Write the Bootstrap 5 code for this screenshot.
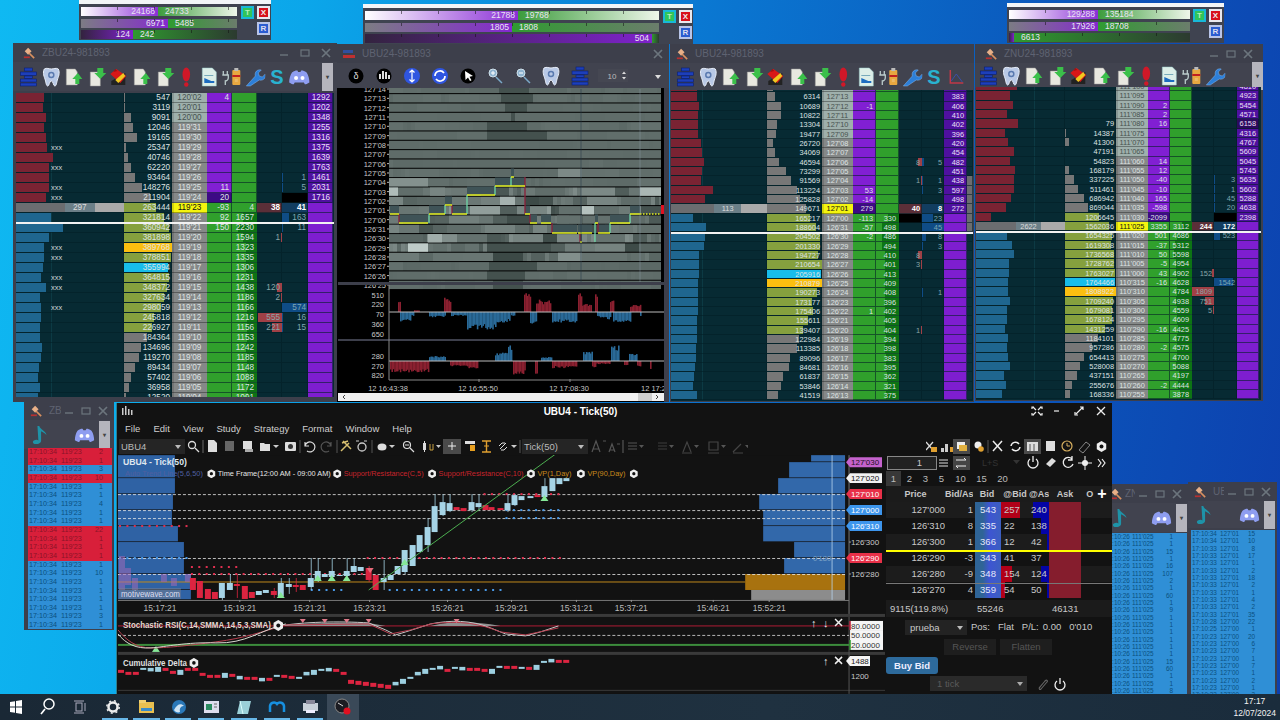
<!DOCTYPE html>
<html lang="en"><head><meta charset="utf-8"><title>Trading desktop</title>
<link href="https://cdn.jsdelivr.net/npm/bootstrap@5.3.0/dist/css/bootstrap.min.css" rel="stylesheet">
<style>
html,body{margin:0;height:720px;overflow:hidden}
body{font-family:"Liberation Sans",Arial,sans-serif;background:#111}
.desk{width:1280px;height:720px;overflow:hidden;background:linear-gradient(100deg,#0fb9f2 0,#0ba6ea 22%,#0a78d2 50%,#0b55ba 78%,#0d3fae 100%)}
.dwin{position:absolute;background:#3d3f4b;overflow:hidden}
.w-zb{left:13px;top:43px;width:324px;height:359px}
.w-ub1{left:337px;top:44px;width:332px;height:358px}
.w-ub2{left:670px;top:44px;width:304px;height:358px}
.w-zn{left:975px;top:44px;width:288px;height:357px}
.w-ts1{left:24px;top:401px;width:90px;height:229px}
.w-ts2{left:1100px;top:484px;width:88px;height:210px}
.w-ts3{left:1188px;top:482px;width:89px;height:212px}
.w-main{left:116px;top:403px;width:996px;height:291px;background:#121212;border-left:1px solid #2f7f8d;color:#ddd}
.mini{position:absolute;background:#3f4350;border-top:4px solid #f2f5f7;height:40px}
.m1{left:79px;top:0;width:192px}.m2{left:363px;top:4px;width:330px}.m3{left:1007px;top:3px;width:217px}
.mbars{position:absolute;left:2px;top:3px}
.mbar{display:flex;height:9px;margin-bottom:2.5px;font-size:8.5px;line-height:9px;color:#e9e3f2;position:relative}
.mbar::after{content:"";position:absolute;inset:0 0 auto 0;height:3px;background:repeating-linear-gradient(90deg,transparent 0 36px,#1118 36px 37px)}
.mp{text-align:right;padding-right:3px;overflow:hidden}.mg{padding-left:7px;overflow:hidden}
.b1 .mp{background:linear-gradient(90deg,#fff,#8a2fd6)}.b1 .mg{background:linear-gradient(90deg,#3c9c3c,#eef6ea)}
.b2 .mp{background:linear-gradient(90deg,#7c7c84,#8428d0)}.b2 .mg{background:linear-gradient(90deg,#2f9c30,#6b7d6c)}
.b3 .mp{background:linear-gradient(90deg,#33233f,#7f22cc)}.b3 .mg{background:linear-gradient(90deg,#2f9a2f,#2c3a30)}
.mbtn{position:absolute;width:13px;height:13px;font-size:8px;line-height:10px;text-align:center;font-weight:700}
.mt{background:#31c45a;border:2px solid #18b8d8;color:#b8f0b8;top:2px}
.mx{background:#d8101c;border:2px solid #e8e8ee;color:#eee;top:2px}
.mr{background:#2a5cd0;border:2px solid #b8c4e8;color:#dde;top:18px}
.m1 .mt{left:162px}.m1 .mx,.m1 .mr{left:178px}
.m2 .mt{left:300px}.m2 .mx,.m2 .mr{left:316px}
.m3 .mt{left:186px}.m3 .mx,.m3 .mr{left:202px}
.tbar{height:19px;display:flex;align-items:center;padding:0 6px;font-size:10px;color:#5f6372;gap:3px}
.tbar span{flex:1;white-space:nowrap;overflow:hidden}
.tbar svg{flex:none}
.tools{display:flex;align-items:center;height:29px;background:#41434f}
.tools>svg,.tools>b{flex:none}
.ti{width:22.6px;height:20px}
.sbtn{font:700 20px/20px "Liberation Sans",sans-serif;color:#29b2d0;width:22.6px;text-align:center}
.ddb{width:11px;height:28px;background:#b5b5bd;margin-left:auto;text-align:center;color:#444;font-size:6px;line-height:28px;flex:none}
.lad{position:absolute;left:3px;background:#072a33;overflow:hidden;color:#dfe3e3}
.w-zb .lad{top:50px;width:318px;font-size:8.2px;height:304px}
.w-ub2 .lad{left:1px;top:46px;width:302px;font-size:7.4px;height:311px}
.w-ub2 .lrow:first-child{margin-top:-7px}
.w-zn .lad{left:1px;top:43px;width:285px;font-size:7.4px;height:313px}
.w-zn .lrow:first-child{margin-top:-5px}
.lrow{display:grid;height:10px;line-height:9.5px}
.w-zb .lrow{grid-template-columns:108px 48px 35px 25px 25px 25px 26px 25px}
.w-ub2 .lrow{height:9.33px;line-height:9px;grid-template-columns:96px 55px 31px 23px 23px 23px 22px 23px 6px}
.w-zn .lrow{height:9.33px;line-height:9px;grid-template-columns:89px 51px 32px 22px 22px 22px 23px 22px}
.lc{position:relative;box-shadow:inset -1px -1px 0 #04202799;overflow:hidden;text-align:right;padding-right:2px;white-space:nowrap}
.lc>i{position:absolute;top:0;bottom:1px;left:0}
.lc>span{position:relative}
.cl{text-align:left;padding:0;background:linear-gradient(90deg,transparent 32.5%,#0c3a44 32.5% 33%,transparent 33% 65.5%,#0c3a44 65.5% 66%,transparent 66%)}
.cl em{position:absolute;left:35px;font-style:normal;color:#cfd6d8;font-size:7.5px}
.fr{background:#7a2333}.fb{background:#1f668f}
.lv{background:#072a33}.fg{background:#777}.fv{background:#85a03e}.fo{background:#fbbf10}.fc{background:#18bdea}
.lp{background:#858888;text-align:center;padding:0;box-shadow:inset 0 -1px 0 #0005,inset 2px 0 0 #0002}
.lp.pale{background:#9fb0ac;color:#47524f}
.lp.now{background:#f4f40f;color:#111}
.lu{background:#811fd3;padding-right:3px}.lu.gr{background:#30a02c}.lu.dk{background:#3d0a85}.lu.dg{background:#0b6a12}
.lgc{background:#30a02c;padding-right:3px}.lgd{background:#0d7414;right:0;left:auto!important}
.l8{color:#8aa6a8}.l9{color:#7fa8b2}
.l8 i{right:0;left:auto;background:#a04046}.l9 i{background:#0f4c86}
.l8.big{background:#5b2f38;color:#fff;font-weight:700}.l9.big{background:#123d60;color:#fff;font-weight:700}
.lblk{background:#000}
.lr{background:#7e1ed0;color:#ece0f6;padding-right:3px}.lr.v{background:#4f10a0}.lr.d{background:#2c0a5e}
.seg{position:absolute;top:0;bottom:1px;left:0;right:0;display:flex;text-align:center;color:#ddd}
.seg u{text-decoration:none;display:block}
.lx{background:#0a2f38}.lx2{background:#6b6d70}
.wline{position:absolute;height:1.5px;background:#f2f2f2;z-index:3;left:3px}
.w-zb .wline{top:179px;width:318px}.w-ub2 .wline{top:188px;left:1px;width:302px}.w-zn .wline{top:187px;left:1px;width:285px}
.svt{font-family:"Liberation Sans",sans-serif}
.tsl{position:absolute;overflow:hidden;background:#2f8fd6;color:#0b4f80}
.w-ts1 .tsl{left:4px;top:47px;width:84px;height:181px;font-size:7.2px}
.w-ts2 .tsl{left:1px;top:49px;width:86px;height:161px;font-size:6.4px}
.w-ts3 .tsl{left:3px;top:48px;width:84px;height:164px;font-size:6.4px}
.tsr{display:grid;white-space:nowrap}
.w-ts1 .tsr{height:8.67px;line-height:8.67px;grid-template-columns:32px 29px 13px;padding-left:1px}
.w-ts2 .tsr,.w-ts3 .tsr{height:7.33px;line-height:7.33px}
.w-ts2 .tsr{grid-template-columns:27px 27px 14px;padding-left:4px}
.w-ts3 .tsr{grid-template-columns:28px 26px 9px;padding-left:1px}
.tsr b{font-weight:400;text-align:right}
.tsr.rd{background:#d81f3a;color:#8a1428}
.mtitle{height:17px;position:relative;color:#fff;font-weight:700;font-size:10px;line-height:17px;text-align:center;padding-right:68px}
.mtitle svg{position:absolute;top:1px}
.mmenu{height:18px;display:flex;font-size:9.5px;line-height:18px;color:#cfcfcf;padding-left:8px;gap:13.1px}
.mtool{height:17px;display:flex}
.fsel{background:#252525;color:#bbb;font-size:9.5px;line-height:15px;height:15px;padding-left:2px;position:relative;flex:none;margin-top:1px}
.fsel::after{content:"";position:absolute;right:4px;top:6px;border:3.5px solid transparent;border-top:4px solid #bbb}
.ssym{width:66px;margin-left:2px}.stick{width:66px}
.mbody{display:flex;height:239px}
.dom{width:226px;margin-left:1px;font-size:9.5px;color:#c8c8c8;flex:none}
.drow2{height:16px;position:relative;display:flex;align-items:center}
.dsp{width:50px;height:14px;border:1px solid #888;background:#222;margin-left:1px;text-align:right;padding-right:14px;line-height:12px}
.dtabs{height:15px;display:flex;line-height:15px;color:#bbb}
.dtabs span{text-align:center}
.dtabs .on{background:#383838}
.dhd{height:16px;line-height:16px;font-weight:700;background:#1b1b1b;display:grid;text-align:center;overflow:hidden;white-space:nowrap;grid-template-columns:59px 28px 28px 28px 20px 32px 31px;font-size:9px}
.dhd div{overflow:hidden}
.dgrid{position:relative}
.dr{height:16px;line-height:16px;display:grid;grid-template-columns:59px 28px 28px 28px 20px 32px 31px;background:#121212}
.dr.alt{background:#1c1c1c}
.dr>div{position:relative;overflow:hidden;text-align:right}
.dr .dp{padding-right:0}
.dr .dbid{margin-left:2px;background:linear-gradient(90deg,#2f6496 0 30%,#3e55d2 55%,#3c5fc0);text-align:center;color:#e4e8f8}
.dr .dat{text-align:left;padding-left:3px}
.dr .dat i{position:absolute;left:0;top:0;bottom:0;background:#b20018}
.dr .das{text-align:left;padding-left:2px}
.dr .das i{position:absolute;right:0;top:0;bottom:0;background:#0404a6}
.dr .dat span,.dr .das span{position:relative}
.dr .dask{background:#851d2d}
.ylw{position:absolute;left:0;right:0;top:48px;height:2px;background:#ff0;z-index:2}
.gyl{position:absolute;left:0;right:0;top:80.5px;height:1px;background:#777;z-index:2}
.dfoot{height:17px;margin-top:2px;line-height:17px;background:#1b1b1b;display:grid;grid-template-columns:87px 75px 60px;padding-left:4px}
.dinfo{height:20px;display:flex;align-items:center;padding-left:19px}
.dsel{width:62px;height:15px;line-height:15px;background:#232323;padding-left:5px;position:relative}
.dsel::after{content:"";position:absolute;right:4px;top:6px;border:3.5px solid transparent;border-top:4px solid #bbb}
.dinfo span{margin-left:4px;white-space:nowrap}
.dacts{height:20px;display:flex;gap:4px;padding:2px 0 0 58px}
.dbtnx{width:52px;height:16px;line-height:15px;background:#1e1e1e;color:#555;text-align:center}
.dbuy{height:18px}
.dbuyb{width:52px;height:17px;line-height:17px;border-radius:3px;background:#2d6a9c;color:#eef;font-weight:700;text-align:center}
.dtk{display:flex;align-items:center;padding-left:44px;height:17px}
.dtks{width:97px;height:15px;line-height:15px;background:#2a2a2a;color:#5a5a5a;padding-left:7px;position:relative}
.dtks::after{content:"";position:absolute;right:4px;top:6px;border:3.5px solid transparent;border-top:4px solid #aaa}
.tskb{position:absolute;left:0;top:694px;width:1280px;height:26px;background:linear-gradient(90deg,#1a2835,#1f3140 60%,#1a2c3c);color:#eee}
.tsk-u{position:absolute;top:24px;height:2px;background:#67b7e8}
.clock{position:absolute;right:4px;top:1px;text-align:center;font-size:8.5px;line-height:12px;color:#f2f2f2}
</style></head>
<body>
<svg width="0" height="0" class="position-absolute">
<defs>
<symbol id="i-stack" viewBox="0 0 22 20"><g fill="#1d3fbb" stroke="#0b1f70" stroke-width=".6"><rect x="7" y="1" width="8" height="3"/><rect x="3" y="5" width="16" height="3.5"/><rect x="7" y="9" width="8" height="2.5"/><rect x="3" y="12" width="16" height="3"/><rect x="3" y="16" width="16" height="3"/></g></symbol>
<symbol id="i-tooth" viewBox="0 0 22 20"><path d="M4 2c3-1.500 4 0 7 0s4-1.500 7 0c2 4 0 8-1 11-.7 3-1 6-2.500 6s-1.500-5-3.500-5-2 5-3.500 5S5.700 16 5 13C4 10 2 6 4 2z" fill="#b9c9e6" stroke="#e8eef8"/><circle cx="11" cy="8" r="2.500" fill="none" stroke="#5a7ab0" stroke-width="1.500"/></symbol>
<symbol id="i-docu" viewBox="0 0 22 20"><path d="M4 2h9l2 3v13H4z" fill="#e8e8e0" stroke="#999" stroke-width=".5"/><path d="M13 17V12H10l5.500-6L20 12h-3v5z" fill="#3bc04a"/></symbol>
<symbol id="i-docd" viewBox="0 0 22 20"><path d="M5 5h10v14H5z" fill="#e8e8e0" stroke="#999" stroke-width=".5"/><path d="M12 1h6v5h3l-6 6-6-6h3z" fill="#3bc04a"/></symbol>
<symbol id="i-tag" viewBox="0 0 22 20"><path d="M4 14V18H18V6z" fill="#222"/><path d="M3 7 9 2 19 9 13 16z" fill="#d81818"/><path d="M8 13 16 6 18 9 11 16z" fill="#f0c820"/><path d="M6 5l2-3 2 2z" fill="#a01010"/></symbol>
<symbol id="i-ex" viewBox="0 0 22 20"><ellipse cx="11" cy="7.500" rx="3.800" ry="7" fill="#d01828"/><circle cx="11" cy="17.500" r="2.200" fill="#d01828"/></symbol>
<symbol id="i-docb" viewBox="0 0 22 20"><path d="M4 1h10l4 4v14H4z" fill="#dceee8" stroke="#9cc" stroke-width=".5"/><path d="M6 11l7 3h3v2H6z" fill="#1c6cc0"/><path d="M6 8h9v1H6z" fill="#7ab"/></symbol>
<symbol id="i-plug" viewBox="0 0 22 20"><path d="M3 4v4M7 4v4M2 8h6v3c0 2-2 3-3 3v4" stroke="#bcc" stroke-width="1.300" fill="none"/><rect x="12" y="3" width="8" height="15" rx="1" fill="#e8a840"/><rect x="14" y="1" width="4" height="3" fill="#bbb"/><rect x="12" y="8" width="8" height="2" fill="#c02020"/><rect x="14.500" y="12" width="3" height="3" fill="#fff3"/></symbol>
<symbol id="i-wr" viewBox="0 0 22 20"><path d="M3 19l9-10c-1-4 2-7 6-6l-3 3 1 3 3 1 3-3c1 4-2 7-6 6L7 19z" fill="#2d7fd8" stroke="#9cf" stroke-width=".4"/></symbol>
<symbol id="i-chrt" viewBox="0 0 22 20"><path d="M5 3v13h13" stroke="#c03848" fill="none" stroke-width="1.500"/><path d="M6 14l5-7 6 8" stroke="#3a50a8" fill="none"/></symbol>
<symbol id="i-dc" viewBox="0 0 24 20"><path d="M4 5c3-2 5-2.500 6-2l.700 1.500h2.600L14 3c1-.5 3 0 6 2 2 3 3 7 3 11-2 1.500-4 2-5 2l-1-2h-10l-1 2c-1 0-3-.5-5-2 0-4 1-8 3-11z" fill="#8e9df0"/><circle cx="8.500" cy="11" r="2.200" fill="#fff"/><circle cx="15.500" cy="11" r="2.200" fill="#fff"/></symbol>
<symbol id="i-ham" viewBox="0 0 14 14"><path d="M2 5 6 1l4 4-4 4z" fill="#e8b088"/><path d="M7 7 13 13" stroke="#d89060" stroke-width="2"/><path d="M1 12h7" stroke="#b83030" stroke-width="2"/></symbol>
<symbol id="i-note" viewBox="0 0 22 24"><path d="M6 2l2 0c1 4 7 5 8 10-2-2-4-3-6-4v10c0 3-3 4-6 4s-4-3-2-4 4-1 5 0z" fill="#1e93a8"/></symbol>
<symbol id="i-gear" viewBox="0 0 10 10"><path d="M5 0 9.300 2.500V7.500L5 10 .7 7.500V2.500z" fill="#eee"/><circle cx="5" cy="5" r="1.800" fill="#111"/></symbol>
<symbol id="i-min" viewBox="0 0 10 10"><path d="M1 7h8" stroke="currentColor" stroke-width="1.400"/></symbol>
<symbol id="i-max" viewBox="0 0 10 10"><rect x="1" y="2" width="8" height="6" fill="none" stroke="currentColor" stroke-width="1.200"/></symbol>
<symbol id="i-x" viewBox="0 0 10 10"><path d="M1 1l8 8M9 1l-8 8" stroke="currentColor" stroke-width="1.700"/></symbol>
</defs></svg>
<div class="desk position-relative">
  <div class="mini m1" id="m1"></div><div class="mini m2" id="m2"></div><div class="mini m3" id="m3"></div>

  <div class="dwin w-zb">
    <div class="tbar"><svg width="12" height="12" class="ms-1"><use href="#i-ham"/></svg><span class="ms-1">ZBU24-981893</span><svg width="10" height="10" class="text-secondary me-2"><use href="#i-min"/></svg><svg width="10" height="10" class="text-secondary me-2"><use href="#i-max"/></svg><svg width="10" height="10" class="text-secondary"><use href="#i-x"/></svg></div>
    <div class="tools px-1" id="tb-zb"></div>
    <div class="lad" id="l-zb"></div><div class="wline"></div>
  </div>

  <div class="dwin w-ub1">
    <div class="tbar"><svg width="12" height="12"><rect y="2" width="10" height="3" fill="#3050a0"/><rect y="7" width="12" height="3" fill="#c03030"/></svg><span class="ms-1">UBU24-981893</span><svg width="10" height="10" class="text-secondary"><use href="#i-x"/></svg></div>
    <div class="tools pe-2 ps-1" style="height:25px">
      <svg width="312" height="25" viewBox="338 64 312 25">
        <circle cx="353" cy="77" r="7.500" fill="#000"/><text x="353" y="80" fill="#ddd" font-size="9" text-anchor="middle" class="svt">δ</text>
        <circle cx="381" cy="77" r="7.500" fill="#000"/><g fill="#ddd"><rect x="376" y="75" width="2" height="5"/><rect x="379" y="72" width="2" height="8"/><rect x="382" y="73" width="2" height="7"/><rect x="385" y="76" width="2" height="4"/></g>
        <circle cx="409" cy="77" r="8" fill="#2f55e0"/><path d="M409 71v12M406.500 73.500l2.500-2.500 2.500 2.500M406.500 80.500l2.500 2.500 2.500-2.500" stroke="#fff" stroke-width="1.200" fill="none"/>
        <circle cx="437" cy="77" r="8" fill="#2f55e0"/><path d="M432 77a5 5 0 0 1 9-3M442 77a5 5 0 0 1-9 3" stroke="#fff" stroke-width="1.700" fill="none"/>
        <circle cx="465" cy="77" r="7.500" fill="#000"/><path d="M462 72l8 5-3.500 .7 2 3.500-1.500 .8-2-3.500-2.500 2.500z" fill="#fff"/>
        <circle cx="490" cy="74" r="4" fill="#8fb4d0" stroke="#cfe0ea"/><path d="M493 78l6 6" stroke="#7aa8c8" stroke-width="1.500"/><path d="M488 74h4M490 72v4" stroke="#fff"/>
        <circle cx="518" cy="74" r="4" fill="#8fb4d0" stroke="#cfe0ea"/><path d="M521 78l6 6" stroke="#7aa8c8" stroke-width="1.500"/><path d="M516 74h4" stroke="#fff"/>
        <use href="#i-tooth" x="537" y="67" width="22" height="20"/><use href="#i-stack" x="566" y="67" width="22" height="20"/>
        <rect x="595" y="70" width="30" height="13" fill="#454752"/><text x="609" y="80" fill="#bbb" font-size="8" text-anchor="middle" class="svt">10</text><path d="M619 75l2-2.500 2 2.500zM619 78l2 2.500 2-2.500z" fill="#ddd"/>
      </svg>
      <svg width="10" height="10" class="ms-auto"><path d="M2 4h6l-3 4z" fill="#ddd"/></svg>
    </div>
    <svg width="332" height="314" viewBox="337 88 332 314" class="d-block" id="heat"></svg>
  </div>

  <div class="dwin w-ub2">
    <div class="tbar"><svg width="12" height="12"><use href="#i-ham"/></svg><span class="ms-1">UBU24-981893</span></div>
    <div class="tools ps-1" id="tb-ub" style="height:27px"></div>
    <div class="lad" id="l-ub"></div><div class="wline"></div>
  </div>

  <div class="dwin w-zn">
    <div class="tbar"><svg width="12" height="12" class="ms-1"><use href="#i-ham"/></svg><span class="ms-1">ZNU24-981893</span><svg width="10" height="10" class="text-secondary me-1"><use href="#i-min"/></svg><svg width="10" height="10" class="text-secondary me-1"><use href="#i-max"/></svg><svg width="10" height="10" class="text-secondary me-1"><use href="#i-x"/></svg></div>
    <div class="tools" id="tb-zn" style="height:25px;padding-left:2px"></div>
    <div class="lad" id="l-zn"></div><div class="wline"></div>
  </div>

  <div class="dwin w-ts1">
    <div class="tbar"><svg width="12" height="12"><use href="#i-ham"/></svg><span class="ms-1">ZB...</span><svg width="10" height="10" class="text-secondary me-1"><use href="#i-min"/></svg><svg width="10" height="10" class="text-secondary me-1"><use href="#i-max"/></svg><svg width="10" height="10" class="text-secondary"><use href="#i-x"/></svg></div>
    <div class="tools ps-2 pe-1"><svg width="20" height="22"><use href="#i-note"/></svg><svg width="21" height="18" class="ms-auto me-1"><use href="#i-dc"/></svg><b class="ddb m-0">▾</b></div>
    <div class="tsl" id="t1"></div>
  </div>
  <div class="dwin w-ts2">
    <div class="tbar"><svg width="12" height="12" class="ms-1"><use href="#i-ham"/></svg><span>ZN...</span><svg width="10" height="10" class="text-secondary me-1"><use href="#i-min"/></svg><svg width="10" height="10" class="text-secondary me-1"><use href="#i-max"/></svg><svg width="10" height="10" class="text-secondary"><use href="#i-x"/></svg></div>
    <div class="tools" style="padding:0 1px 0 8px"><svg width="20" height="22" class="ms-1"><use href="#i-note"/></svg><svg width="21" height="18" class="ms-auto me-1"><use href="#i-dc"/></svg><b class="ddb m-0">▾</b></div>
    <div class="tsl" id="t2"></div>
  </div>
  <div class="dwin w-ts3">
    <div class="tbar"><svg width="12" height="12"><use href="#i-ham"/></svg><span class="ms-1">UB...</span><svg width="10" height="10" class="text-secondary me-1"><use href="#i-min"/></svg><svg width="10" height="10" class="text-secondary me-1"><use href="#i-max"/></svg><svg width="10" height="10" class="text-secondary"><use href="#i-x"/></svg></div>
    <div class="tools ps-2" style="height:27px;padding-right:2px"><svg width="20" height="22"><use href="#i-note"/></svg><svg width="21" height="18" class="ms-auto me-1"><use href="#i-dc"/></svg><b class="ddb m-0">▾</b></div>
    <div class="tsl" id="t3"></div>
  </div>

  <div class="dwin w-main">
    <div class="mtitle"><svg width="12" height="12" class="start-0 ms-1"><g fill="#ccc"><rect x="1" y="4" width="1.500" height="7"/><rect x="4" y="2" width="1.500" height="9"/><rect x="7" y="5" width="1.500" height="6"/><rect x="10" y="6" width="1.500" height="5"/></g></svg>UBU4 - Tick(50)
      <svg width="996" height="16" viewBox="116 403 996 16" class="start-0 top-0">
        <g stroke="#eee" stroke-width="1.200" fill="none"><path d="M1032 407l3 3M1040 407l-3 3M1032 415l3-3M1040 415l-3-3M1031 409v-2h2M1041 409v-2h-2M1031 413v2h2M1041 413v2h-2"/><path d="M1053 411h5"/><path d="M1075 414l7-7M1079 407h3v3M1074 412v3h3"/></g>
        <path d="M1096 407l8 8M1104 407l-8 8" stroke="#eee" stroke-width="1.300"/>
      </svg>
    </div>
    <div class="mmenu"><span>File</span><span>Edit</span><span>View</span><span>Study</span><span>Strategy</span><span>Format</span><span>Window</span><span>Help</span></div>
    <div class="mtool">
      <div class="fsel ssym">UBU4</div>
      <svg width="337" height="17" viewBox="185 438 337 17">
        <g stroke="#ddd" fill="none" stroke-width="1.300"><circle cx="192" cy="445" r="3.500"/><path d="M195 448l4 4"/><path d="M203 440v13" stroke="#555"/></g>
        <path d="M208 440h6l3 3v9h-9z" fill="#ddd"/><path d="M225 441h9v10h-9z" fill="#666"/><path d="M243 441h9v8h-9z" fill="#ddd"/><rect x="245" y="449" width="8" height="3" fill="#aaa"/>
        <path d="M260 443h4l1 1h5v7h-10z" fill="#ddd"/><path d="M273 445h6l-3 3z" fill="#ccc"/>
        <rect x="285" y="442" width="11" height="9" rx="1" fill="#ddd"/><circle cx="290.500" cy="446.500" r="2.500" fill="#333"/>
        <path d="M300 440v13" stroke="#555"/>
        <path d="M305 446a5 5 0 1 1 2 5M305 442v4h4" stroke="#ddd" fill="none" stroke-width="1.200"/>
        <path d="M331 446a5 5 0 1 0-2 5M331 442v4h-4" stroke="#555" fill="none" stroke-width="1.200"/>
        <path d="M337 440v13" stroke="#555"/>
        <path d="M341 451l8-8M343 441l8 8M348 441l-6 2" stroke="#d8c070" stroke-width="1.500"/>
        <circle cx="362" cy="447" r="4" fill="none" stroke="#ccc" stroke-width="1.300"/><path d="M356 441l3 0M367 441l-3 0" stroke="#ccc"/>
        <path d="M372 440v13" stroke="#555"/>
        <ellipse cx="382" cy="447" rx="4.500" ry="3.500" fill="#ddd"/><path d="M389 445h6l-3 3z" fill="#ccc"/>
        <circle cx="407" cy="445" r="3.500" fill="none" stroke="#ddd" stroke-width="1.200"/><path d="M410 448l4 4M405 445h4" stroke="#ddd" stroke-width="1.200"/>
        <rect x="423" y="443" width="3" height="7" fill="#ddd"/><path d="M424.500 441v11" stroke="#ddd"/><path d="M430 444v6h3M433 444v6" stroke="#c8a040" fill="none"/><path d="M436 445h5l-2.500 3z" fill="#ccc"/>
        <rect x="443" y="439" width="18" height="15" fill="#4a4a4a"/><path d="M448 446h8M452 442v8" stroke="#eee"/>
        <rect x="465" y="441" width="10" height="3" fill="#ddd"/><rect x="470" y="445" width="5" height="6" fill="#e8a020"/>
        <path d="M482 441h9M482 452h9M486.500 441v11" stroke="#e0a030" stroke-width="1.400"/><path d="M484 446h5" stroke="#e0a030"/>
        <path d="M500 449l6-6M499 446l3-3h3M507 447l-3 3h-3" stroke="#ddd" fill="none"/><path d="M511 445h6l-3 3z" fill="#ccc"/>
        <path d="M520 440v13" stroke="#555"/>
      </svg>
      <div class="fsel stick">Tick(50)</div>
      <svg width="160" height="17" viewBox="590 438 160 17">
        <g fill="none" stroke="#555" stroke-width="1.200"><path d="M594 452l4-11 4 11M595 449h6M605 441h3"/><path d="M611 452l3-8 3 8M612 450h4M619 444h3"/><path d="M625 440v13"/><path d="M630 443h9M630 446h9M630 449h9"/><path d="M660 443h9M660 446h9M660 449h9" stroke="#3c3c3c"/><path d="M685 452l4-10 4 10M684 453h10" stroke="#444"/><path d="M711 442h9v8h-9zM710 453h11" stroke="#444"/><path d="M735 452l8-8M735 453h10" stroke="#444"/></g>
        <path d="M641 445h5l-2.500 3zM671 445h5l-2.500 3zM696 445h5l-2.500 3zM723 445h5l-2.500 3zM747 445h5l-2.500 3z" fill="#555"/>
      </svg>
      <svg width="186" height="17" viewBox="926 438 186 17" class="ms-auto">
        <path d="M926 442l7 8M933 442l-7 8" stroke="#ddd" stroke-width="1.300"/><rect x="931" y="447" width="6" height="5" fill="#e0a030"/>
        <path d="M941 452v-4h3v4zM945 452v-8h3v8z" fill="#ccc"/><rect x="950" y="447" width="4" height="5" fill="#e0a030"/>
        <rect x="953" y="439" width="17" height="15" fill="#4a4a4a"/><rect x="957" y="442" width="8" height="7" fill="#eee"/><rect x="959" y="445" width="8" height="6" fill="#e0b040"/>
        <circle cx="978" cy="445" r="3.500" fill="#eee"/><circle cx="981" cy="449" r="2.800" fill="#e0a030"/>
        <path d="M988 440v13" stroke="#555"/><path d="M993 441l9 10M1002 441l-9 10" stroke="#eee" stroke-width="1.500"/>
        <path d="M1011 446a4.500 4.500 0 0 1 8-2M1020 447a4.500 4.500 0 0 1-8 2" fill="none" stroke="#eee" stroke-width="1.500"/>
        <rect x="1024" y="439" width="17" height="15" fill="#4a4a4a"/><path d="M1027 442h11v9h-11z" fill="#ddd"/><path d="M1030 444v7M1034 444v7" stroke="#555"/>
        <rect x="1046" y="441" width="9" height="10" fill="#ddd"/>
        <circle cx="1067" cy="446" r="5" fill="none" stroke="#d8b060" stroke-width="1.200"/><path d="M1067 443v3h3" stroke="#d8b060" fill="none"/>
        <path d="M1079 450l7-8 4 3-7 8z" fill="none" stroke="#888"/>
        <use href="#i-gear" x="1096" y="441" width="11" height="11"/>
      </svg>
    </div>
    <div class="mbody">
      <svg width="769" height="239" viewBox="116 455 769 239" class="d-block flex-none" id="chart"></svg>
      <div class="dom">
        <div class="drow2"><div class="dsp">1</div>
          <svg width="170" height="16" viewBox="938 455 170 16" class="position-absolute end-0 me-1 top-0">
            <path d="M939 460h9M939 463h9M939 466h9" stroke="#ddd"/>
            <rect x="953" y="456" width="17" height="14" fill="#444"/><path d="M956 460h10l-2-2M966 466h-10l2 2" stroke="#eee" fill="none"/>
            <text x="982" y="466" fill="#333" font-size="9" class="svt">L+S</text><path d="M1013 460h7l-3.500 4z" fill="#333"/>
            <path d="M1030 459a5 5 0 1 0 6 0M1033 456v6" fill="none" stroke="#eee" stroke-width="1.300"/>
            <path d="M1046 464l6-6 4 3-6 6z" fill="#ddd"/>
            <path d="M1072 459a5 5 0 1 0 1 5M1072 456v4h-4" fill="none" stroke="#eee" stroke-width="1.300"/>
            <circle cx="1085" cy="463" r="3" fill="#eee"/><path d="M1085 456v14M1078 463h14" stroke="#eee"/>
            <path d="M1098 459l3 4-3 4M1102 459l3 4-3 4" fill="none" stroke="#eee" stroke-width="1.200"/>
          </svg>
        </div>
        <div class="dtabs" id="dtabs"><span class="on" style="width:15px">1</span><span style="width:17px">2</span><span style="width:15px">3</span><span style="width:17px">5</span><span style="width:21px">10</span><span style="width:21px">15</span><span style="width:21px">20</span></div>
        <div class="dhd"><div>Price</div><div>Bid/As</div><div>Bid</div><div>@Bid</div><div>@As</div><div>Ask</div><div class="d-flex justify-content-center gap-1">O<span class="fs-6 lh-1 text-white">+</span></div></div>
        <div class="dgrid" id="dgrid"></div>
        <div class="dfoot"><span>9115(119.8%)</span><span>55246</span><span>46131</span></div>
        <div class="dinfo"><div class="dsel">prueba</div><span>Pos:</span><span class="ms-2">Flat</span><span class="ms-2">P/L:</span><span>0.00</span><span class="ms-2">0'010</span></div>
        <div class="dacts"><div class="dbtnx">Reverse</div><div class="dbtnx">Flatten</div></div>
        <div class="dbuy"><div class="dbuyb">Buy Bid</div></div>
        <div class="dtk"><div class="dtks">1 tick</div>
          <svg width="32" height="14" viewBox="1032 677 32 14" class="ms-2"><path d="M1036 688l6-7c2-2 3 0 2 1l-6 7c-1 1-3 0-1-2l5-6" fill="none" stroke="#666" stroke-width="1.100"/><path d="M1054 681a5 5 0 1 0 6 0M1057 678v6" fill="none" stroke="#eee" stroke-width="1.300"/></svg>
        </div>
      </div>
    </div>
  </div>

  <div class="tskb">
    <svg width="400" height="26" viewBox="0 694 400 26" class="position-absolute start-0 top-0">
      <rect x="327" y="694" width="32" height="26" fill="#3a4958"/>
      <path d="M10 702l5-.8v5.300h-5zM16 701l6-1v6.500h-6zM10 707.500h5v5.300l-5-.8zM16 707.500h6v6.500l-6-1z" fill="#fff"/>
      <circle cx="49" cy="704" r="5" fill="none" stroke="#fff" stroke-width="1.500"/><path d="M45 709l-4 5" stroke="#fff" stroke-width="1.700"/>
      <g fill="none" stroke="#aab"><rect x="76" y="703" width="6" height="8"/><path d="M74 701h10M74 713h10M85 703v8"/></g>
      <circle cx="113" cy="707" r="4.500" fill="none" stroke="#eee" stroke-width="2.500"/><circle cx="113" cy="707" r="6.200" fill="none" stroke="#eee" stroke-width="1.500" stroke-dasharray="2 2.900"/>
      <rect x="139" y="702" width="15" height="11" fill="#e8c050"/><rect x="139" y="700" width="7" height="3" fill="#f0d070"/><rect x="141" y="708" width="11" height="3" fill="#3a8cc8"/>
      <circle cx="179" cy="707" r="7" fill="#2a78b8"/><path d="M174 710c3-6 7-7 10-4-2 0-5 1-4 6-2 1-5 0-6-2z" fill="#cfe4f4"/>
      <rect x="204" y="701" width="15" height="12" fill="#dde"/><rect x="206" y="704" width="6" height="6" fill="#2a8a60"/><path d="M214 704h3M214 707h3" stroke="#666"/>
      <path d="M240 701h11l-3 13h-11z" fill="#9bd0d8"/><path d="M240 701l3 13" stroke="#dff"/>
      <path d="M270 712v-6a4 4 0 0 1 7-2 4 4 0 0 1 7 2v6" fill="none" stroke="#1790e0" stroke-width="2.500"/>
      <rect x="303" y="703" width="15" height="8" fill="#c8d0d8"/><rect x="306" y="700" width="9" height="4" fill="#889"/><rect x="306" y="710" width="9" height="3" fill="#eef"/>
      <circle cx="342" cy="706" r="7" fill="#1c1c22" stroke="#888"/><path d="M338 703l5 3" stroke="#ddd"/><circle cx="347" cy="711" r="3.500" fill="#e01020"/>
    </svg>
    <div class="tsk-u" style="left:102px;width:26px"></div><div class="tsk-u" style="left:133px;width:27px"></div><div class="tsk-u" style="left:165px;width:26px"></div><div class="tsk-u" style="left:198px;width:26px"></div><div class="tsk-u" style="left:231px;width:26px"></div><div class="tsk-u" style="left:264px;width:26px"></div><div class="tsk-u" style="left:297px;width:26px"></div>
    <div class="clock">17:17<br>12/07/2024</div>
  </div>
</div>
<script src="https://cdn.jsdelivr.net/npm/bootstrap@5.3.0/dist/js/bootstrap.bundle.min.js"></script>
<script>
function mini(id,w,bars){
  var h='<div class="mbars">';
  bars.forEach(function(b,i){
    h+='<div class="mbar b'+(i+1)+'" style="width:'+w+'px"><div class="mp" style="width:'+b[0]+'px">'+b[1]+'</div><div class="mg" style="width:'+(w-b[0])+'px">'+b[2]+'</div></div>';
  });
  h+='</div><div class="mbtn mt">T</div><div class="mbtn mx">X</div><div class="mbtn mr">R</div>';
  document.getElementById(id).innerHTML=h;
}
mini('m1',156,[[77,'24168','24733'],[87,'6971','5485'],[52,'124','242']]);
mini('m2',294,[[153,'21788','19768'],[147,'1805','1808'],[287,'504','']]);
mini('m3',181,[[89,'129288','135184'],[89,'17926','18708'],[5,'','6613']]);

function tools(id,list,dd){
  var h='';
  list.forEach(function(n){
    if(n==='S') h+='<b class="sbtn">S</b>';
    else h+='<svg class="ti" viewBox="0 0 22 20"><use href="#i-'+n+'"/></svg>';
  });
  if(dd) h+='<b class="ddb">▾</b>';
  document.getElementById(id).innerHTML=h;
}
var base=['stack','tooth','docu','docd','tag','docu','docd','ex','docb','plug','wr'];
tools('tb-zb',base.concat(['S','dc']),true);
tools('tb-ub',base.concat(['S','chrt']),false);
tools('tb-zn',base,true);

function ladder(id,cfg){
  var maxV=0,maxG=0;
  cfg.rows.forEach(function(r){var v=+r[2]||0;if(v>maxV)maxV=v;var g=+r[5]||0;if(g>maxG)maxG=g;});
  var maxC=cfg.cmax,html='';
  cfg.rows.forEach(function(r,i){
    var hl=i===cfg.hl,up=i<cfg.hl;
    var price=r[3],v=+r[2]||0;
    var vw=cfg.ov[r[2]]!==undefined?cfg.ov[r[2]]:v/maxV*cfg.vw;
    var vc='fg';
    if(i>=cfg.g0&&i<=cfg.g1) vc='fv';
    if(price===cfg.or) vc='fo';
    if(price===cfg.cy) vc='fc';
    var left;
    if(hl) left='<div class="seg"><u class="lx2" style="width:45%"></u><u style="width:28%;background:#6b7f88">'+r[0]+'</u><u style="width:27%;background:#aaa"></u></div>';
    else left='<i class="'+(up?'fr':'fb')+'" style="width:'+r[0]+'px"></i>'+(r[1]?'<em>xxx</em>':'');
    var pu=r[4],puc='lu';
    if(!up) puc+=' gr';
    var puTxt=pu;
    if(pu&&pu.charAt(0)==='!'){puTxt=pu.slice(1);puc='lu dk';}
    var gv=+r[5]||0;
    var gb=gv?'<i class="lgd" style="width:'+Math.round(cfg.gw*Math.min(1,gv/maxG))+'px"></i>':'';
    var c8=r[6],c9=r[7],c8cls='lc l8',c9cls='lc l9',c8h='',c9h='';
    if(hl){c8cls+=' big';c9cls+=' big';c8h='<span>'+c8+'</span>';c9h='<span>'+c9+'</span>';}
    else{
      if(c8==='B')c8cls+=' lblk';
      else if(c8)c8h='<i style="width:'+Math.min(cfg.cw,Math.max(1,Math.round(cfg.cw*(+c8)/maxC)))+'px"></i><span>'+c8+'</span>';
      if(c9==='B')c9cls+=' lblk';
      else if(c9)c9h='<i style="width:'+Math.min(cfg.cw,Math.max(1,Math.round(cfg.cw*(+c9)/maxC)))+'px"></i><span>'+c9+'</span>';
    }
    var rc='lc lr'+(r[8]?(r[8].charAt(0)==='!'?' d':' v'):'');
    var rt=r[8].replace('!','');
    html+='<div class="lrow"><div class="lc cl">'+left+'</div>'+
      '<div class="lc lv"><i class="'+vc+'" style="width:'+vw.toFixed(1)+'px"></i><span>'+r[2]+'</span></div>'+
      '<div class="lc lp'+(hl?' now':(i<cfg.pale?' pale':''))+'">'+price+'</div>'+
      '<div class="lc '+puc+'"><span>'+puTxt+'</span></div>'+
      '<div class="lc lgc">'+gb+'<span>'+r[5]+'</span></div>'+
      '<div class="'+c8cls+'">'+c8h+'</div><div class="'+c9cls+'">'+c9h+'</div>'+
      '<div class="'+rc+'"><span>'+rt+'</span></div>'+(cfg.ext?'<div class="lc '+(i>9&&i<16?'lx2':'lx')+'"></div>':'')+'</div>';
  });
  document.getElementById(id).innerHTML=html;
}
function P(s){return s.trim().split('\n').map(function(l){return l.trim().split('|');});}
ladder('l-zb',{hl:11,g0:11,g1:23,or:"119'19",cy:"119'17",pale:3,vw:48,gw:19,cw:25,cmax:574,
 ov:{3119:1,9091:7,12046:9,19165:13,25347:2,40746:4,62220:7,93464:11},rows:P(`
28||547|120'02|4||||1292
27||3119|120'01|||||1202
30||9091|120'00|||||1348
28||12046|119'31|||||1255
30||19165|119'30|||||1316
31|x|25347|119'29|||||1375
37||40746|119'28|||||1639
33|x|62220|119'27|||||1763
33||93464|119'26||||1|1461
33|x|148276|119'25|11|||5|2031
30|x|211904|119'24|!20|||B|1716
297||263444|119'23|-93|4|38|41|
35||321814|119'22|92|1657||163|
47||360942|119'21|150|2230||11|
33||381898|119'20||1594|1||
28|x|389768|119'19||1323|||
28|x|378851|119'18||1335|||
27||355994|119'17||1306|||
25|x|364815|119'16||1231|||
30|x|348372|119'15||1438|120||
24||327634|119'14||1186|2||
25|x|298059|119'13||1166||574|
25||245818|119'12||1216|555|16|
24||226927|119'11||1156|221|15|
24||184364|119'10||1153|||
26||134696|119'09||1242|||
25||119270|119'08||1185|||
23||89434|119'07||1148|||
22||57402|119'06||1088|||
24||36958|119'05||1172|||
22||12520|119'04||1091|||`)});
ladder('l-ub',{ext:1,hl:13,g0:14,g1:26,or:"126'25",cy:"126'26",pale:6,vw:55,gw:17,cw:22,cmax:45,
 ov:{6300:6,6314:8,10689:14,10822:14,13304:10,19477:9,26720:6,34069:8},rows:P(`
26||6300|127'14||||||380
26||6314|127'13||||||383
28||10689|127'12|-1|||||406
27||10822|127'11||||||410
27||13304|127'10||||||402
27||19477|127'09||||||396
30||26720|127'08||||||420
31||34069|127'07||||||454
33||46594|127'06|||8|5||482
31||73299|127'05||||||451
30||91569|127'04|||1|1||438
42||113224|127'03|53|||3||597
34||125828|127'02|-14|||||498
113||149671|127'01|!279||40|8||272
22||165217|127'00|-113|330|B|23||
35||188604|126'31|-57|498||45||
34||204502|126'30|-2|486||8||
33||201330|126'29||494||3||
28||194727|126'28||410|8|||
28||210654|126'27||401|3|||
28||205916|126'26||413||||
27||210879|126'25||409||||
27||190273|126'24||408||1||
27||173177|126'23||396||||
27||175406|126'22|1|402||||
26||155611|126'21||405||||
26||139407|126'20||404|1|||
26||122984|126'19||394||||
25||113385|126'18||398||||
25||89096|126'17||383||||
24||84681|126'16||395||||
23||61837|126'15||362||||
22||53846|126'14||321||||
26||41519|126'13||375||||`).map(function(r){return [r[0],r[1],r[2],r[3],r[4],r[5],r[6],r[7],r[9]||''];})});
ladder('l-zn',{hl:15,g0:14,g1:26,or:"110'310",cy:"110'315",pale:8,vw:51,gw:18,cw:22,cmax:1809,
 ov:{14387:1,41300:4,47191:0,54823:0,79:0,168179:4,337225:9,511461:13,686942:19,869044:23},rows:P(`
41|||111'100|||||4810
34|||111'095|||||4923
37|||111'090|2||||5454
31|||111'085|2||||4571
42||79|111'080|16||||!6158
29||14387|111'075|||||4316
32||41300|111'070|||||4767
38||47191|111'065|||||5609
34||54823|111'060|14||||5045
39||168179|111'055|12||||5745
38||337225|111'050|-40|||3|5635
38||511461|111'045|-10|||1|5602
35||686942|111'040|165|||45|5288
30||869044|111'035|-598|||20|4638
15||1206645|111'030|!-2099|||B|2398
2622||1562036|111'025|3355|3112|244|172|
31||1654325|111'020|501|4686||523|
36||1619308|111'015|-37|5312|||
38||1736568|111'010|50|5598|||
33||1728762|111'005|-5|4954|||
33||1763027|111'000|43|4902|152||
32||1764466|110'315|-16|4628||1542|
32||1808922|110'310||4784|1809||
34||1709240|110'305||4938|751||
31||1679081|110'300||4559|5||
31||1678124|110'295||4609|||
29||1431259|110'290|-16|4425|||
32||1184101|110'285||4775|||
31||957286|110'280|-2|4575|||
32||654413|110'275||4700|||
34||528008|110'270||5088|||
28||437151|110'265||4197|||
30||255676|110'260|-2|4444|||
26||168336|110'255||3878|||`)});

function tsales(id,rows){
  document.getElementById(id).innerHTML=rows.map(function(r){
    return '<div class="tsr'+(r[3]?' rd':'')+'"><span>'+r[0]+'</span><span>'+r[1]+'</span><b>'+r[2]+'</b></div>';
  }).join('');
}
var a=[[2,1],[1,1],[3,0],[10,1],[1,0],[1,0],[4,0],[1,0],[1,0],[22,1],[1,1],[1,1],[1,1],[1,0],[10,0],[1,0],[1,0],[1,0],[1,0],[3,0],[1,0]];
tsales('t1',a.map(function(x){return ['17:10:34',"119'23",x[0],x[1]];}));
tsales('t2',[1,1,15,1,16,107,2,1,60,1,9,1,1,1,1,1,1,15,60,1,1,8].map(function(v){return ['17:10:26',"111'025",v,0];}));
tsales('t3',[['34',"127'01",15],['34',"127'01",10],['33',"127'01",8],['33',"127'01",17],['33',"127'01",1],['33',"127'01",2],['33',"127'01",18],['33',"127'01",2],['33',"127'01",1],['33',"127'01",4],['33',"127'01",2],['33',"127'01",35],['28',"127'00",22],['25',"127'00",1],['23',"127'00",20],['23',"127'00",6],['23',"127'00",7],['23',"127'00",1],['23',"127'00",7],['23',"127'00",1],['23',"127'00",2],['23',"127'00",1],['23',"127'00",2]].map(function(x){return ['17:10:'+x[0],x[1],x[2],0];}));

(function(){
  var d=[["127'000",1,543,257,240,19,16,1],["126'310",8,335,22,138,0,8,0],["126'300",1,366,12,42,0,2,1],["126'290",-3,343,41,37,0,0,0],["126'280",-9,348,154,124,11,8,1],["126'270",4,359,54,50,4,2,0]];
  document.getElementById('dgrid').innerHTML=d.map(function(r){
    return '<div class="dr'+(r[7]?' alt':'')+'"><div class="dp">'+r[0]+'</div><div>'+r[1]+'</div><div class="dbid">'+r[2]+'</div><div class="dat"><i style="width:'+r[5]+'px"></i><span>'+r[3]+'</span></div><div class="das"><i style="width:'+r[6]+'px"></i><span>'+r[4]+'</span></div><div class="dask"></div><div></div></div>';
  }).join('')+'<div class="ylw"></div><div class="gyl"></div>';
})();

function rng(s){return function(){s|=0;s=s+0x6D2B79F5|0;var t=Math.imul(s^s>>>15,1|s);t=t+Math.imul(t^t>>>7,61|t)^t;return((t^t>>>14)>>>0)/4294967296;};}
(function(){
  var R=rng(42),s='<rect x="337" y="88" width="332" height="314" fill="#000"/>';
  var labels=["127'14","127'13","127'12","127'11","127'10","127'09","127'08","127'07","127'06","127'05","127'04","127'03","127'02","127'01","127'00","126'31","126'30","126'29","126'28","126'27","126'26","126'25"];
  var amp=[.06,.06,.03,.02,.07,.03,.015,.015,.04,.1,.06,.45,.35,.6,.25,.35,.45,.35,.2,.08,.05,.05];
  var col=function(v){var c=Math.round(v);return 'rgb('+c+','+(c+13)+','+(c+10)+')';};
  labels.forEach(function(l,i){
    var y=89+9.33*i;
    s+='<text x="386" y="'+(y+3)+'" text-anchor="end" fill="#c8c8c8" font-size="7.5" class="svt">'+l+'</text><path d="M387 '+y+'h2" stroke="#bbb"/>';
    var x=389;
    while(x<661){
      var w=R()<.45?4:(R()<.5?14:30);
      if(x+w>661)w=661-x;
      var v=95+(R()-.4)*amp[i]*130;
      if((i<6||i>=17)&&x>=484&&x<522&&R()<.75) v=68;
      if(amp[i]>.15&&R()<.14)v-=24;
      s+='<rect x="'+x+'" y="'+(y-4.2)+'" width="'+w+'" height="8.33" fill="'+col(Math.max(60,Math.min(195,v)))+'"/>';
      x+=w;
    }
  });
  var bright=[[10,389,428,132],[11,389,398,175],[11,640,661,170],[11,430,445,120],[12,500,515,165],[13,582,594,180],[13,470,500,145],[17,408,428,190],[15,389,399,120],[16,428,442,160],[14,557,582,100],[9,558,582,125],[18,558,582,130]];
  bright.forEach(function(b){var y=89+9.33*b[0];s+='<rect x="'+b[1]+'" y="'+(y-4.2)+'" width="'+(b[2]-b[1])+'" height="8.33" fill="'+col(b[3])+'"/>';});
  var seg=[[390,399,214],[399,428,223],[429,445,214],[445,452,205],[452,467,214],[467,495,195],[495,525,186],[511,514,177],[525,530,214],[530,537,223],[541,551,223],[552,577,233],[578,592,233],[580,582,242],[595,598,223],[598,610,233],[610,630,223],[630,640,214]];
  seg.forEach(function(q){s+='<rect x="'+q[0]+'" y="'+(q[2]-8.5)+'" width="'+(q[1]-q[0])+'" height="8.3" fill="#3f5357"/>';});
  for(var k=1;k<seg.length;k++){var p=seg[k-1],q=seg[k];s+='<path d="M'+q[0]+' '+p[2]+'V'+q[2]+'" stroke="'+(q[2]>p[2]?'#8a1f3a':'#6fd8a8')+'" stroke-width="1.300"/>';}
  seg.forEach(function(q){s+='<path d="M'+q[0]+' '+q[2]+'H'+q[1]+'" stroke="#e4f020" stroke-width="1.500"/>';});
  s+='<path d="M640 214H660" stroke="#e4f020" stroke-width="1.500" stroke-dasharray="1.500 1.500"/><rect x="661" y="205" width="3" height="9" fill="#e01020"/>';
  s+='<path d="M640 89V283" stroke="#9ab" stroke-opacity=".35"/><path d="M581 89V283" stroke="#234" stroke-opacity=".5"/><rect x="338" y="282" width="330" height="3" fill="#3d3f4b"/><rect x="338" y="339" width="330" height="2" fill="#3d3f4b"/>';
  function bars(y0,pts,seed){var R2=rng(seed),o='';pts.forEach(function(p){for(var x=p[0];x<p[1];x+=1.4){var h=Math.abs(p[2])*(.7+R2()*.35);var c=p[2]>0?p[3]||'#8a2030':p[3]||'#2a6a98';o+=p[2]>0?'<rect x="'+x+'" y="'+(y0-h)+'" width="1.600" height="'+h+'" fill="'+c+'"/>':'<rect x="'+x+'" y="'+y0+'" width="1.600" height="'+h+'" fill="'+c+'"/>';}});return o;}
  var p1=[[398,399.500,14],[400,410,-9],[410,414,-4],[414,419,2],[429,445,-5],[444,447,14],[447,451,11],[451,467,-4],[467,495,-17],[495,510,-10],[511,514,-4],[524,530,18],[530,536,-12],[536,540,12],[540,551,11],[552,577,-10],[578,582,18],[582,591,8],[595,597,20],[597,600,-5],[600,610,-7],[610,613,13],[613,630,-10],[630,640,7],[640,641,-5]];
  s+=bars(312,p1,7);
  var p2=[[390,428,-11,'#8a2030'],[429,445,5,'#2a6a98'],[450,467,-5,'#8a2030'],[467,478,-7,'#8a2030'],[495,508,8,'#2a6a98'],[508,511,15,'#2a6a98'],[513,525,-13,'#8a2030'],[535,537,-14,'#8a2030'],[541,551,4,'#2a6a98'],[552,577,-7,'#8a2030'],[583,592,9,'#2a6a98'],[592,595,-6,'#8a2030'],[595,610,-3,'#8a2030'],[611,618,15,'#2a6a98'],[624,628,-4,'#8a2030'],[629,637,7,'#2a6a98'],[637,640,-6,'#8a2030'],[650,651,-9,'#8a2030']];
  s+=bars(361,p2,9);
  s+='<path d="M389 312H664M389 361H664" stroke="#bbb"/><path d="M389 285V380M389 380H664M479 379v3M570 379v3" stroke="#888"/>';
  [[510,295],[220,304],[70,314],[360,324],[650,334],[280,356],[270,366],[820,375]].forEach(function(q){s+='<text x="384" y="'+(q[1]+3)+'" text-anchor="end" fill="#c8c8c8" font-size="7.500" class="svt">'+q[0]+'</text>';});
  [["12 16:43:38",388],["12 16:55:50",478],["12 17:08:30",569]].forEach(function(q){s+='<text x="'+q[1]+'" y="391" text-anchor="middle" fill="#c8c8c8" font-size="7.500" class="svt">'+q[0]+'</text>';});
  s+='<text x="641" y="391" fill="#c8c8c8" font-size="7.500" class="svt">12 17:2</text>';
  s+='<rect x="338" y="393" width="326" height="8" fill="#f0f0f0"/><rect x="638" y="393" width="14" height="8" fill="#cdcdcd"/><path d="M345 395l-2 2 2 2M656 395l2 2-2 2" stroke="#444" fill="none"/><rect x="664" y="88" width="5" height="314" fill="#3d3f4b"/>';
  document.getElementById('heat').innerHTML=s;
})();

(function(){
  var s='<rect x="116" y="455" width="769" height="239" fill="#121212"/>';
  function T(x,y,t,c,fs,extra){return '<text x="'+x+'" y="'+y+'" fill="'+c+'" font-size="'+(fs||8)+'" class="svt" '+(extra||'')+'>'+t+'</text>';}
  function L(n){return 'textLength="'+n+'" lengthAdjust="spacingAndGlyphs"';}
  [[455,23,57],[478,16,57],[494,16,55],[510,16,54],[526,16,60],[542,16,66],[558,16,66],[574,16,73],[590,10,73]].forEach(function(r){s+='<rect x="117" y="'+r[0]+'" width="'+r[2]+'" height="'+(r[1]-.7)+'" fill="#2f62a4"/>';});
  [[455,7,811],[462,16,789],[478,16,778],[494,16,759],[510,16,763],[526,16,763],[542,16,794],[558,16,784]].forEach(function(r){s+='<rect x="'+r[2]+'" y="'+r[0]+'" width="'+(845-r[2])+'" height="'+(r[1]-.7)+'" fill="#3268aa"/>';});
  s+='<rect x="745" y="574" width="100" height="16" fill="#a8720f"/><rect x="751" y="590" width="94" height="10" fill="#8c8c8c"/><path d="M832 455V600" stroke="#b8d4ec" stroke-opacity=".8"/>';
  [494,510,518,558,574].forEach(function(y){s+='<path d="M117 '+(y+.5)+'H845" stroke="#e8e8e8" stroke-dasharray="3 2" stroke-width=".8"/>';});
  s+='<path d="M117 582H745" stroke="#c08a1c"/>';
  function dots(x1,x2,y,c){var o='';for(var x=x1;x<=x2;x+=7.4)o+='<rect x="'+x+'" y="'+(y-1)+'" width="2" height="2" fill="'+c+'"/>';return o;}
  s+=dots(118,186,526,'#e03050')+dots(190,238,567,'#e03050')+dots(190,365,574,'#e03050')+dots(366,560,558,'#e03050')+dots(483,560,494,'#e03050');
  s+=dots(118,186,558,'#4a9ae8')+dots(310,340,590,'#4a9ae8')+dots(388,502,590,'#4a9ae8')+dots(505,560,510,'#4a9ae8')+dots(505,560,518,'#4a9ae8');
  [[118,556,590],[124,568,585],[131,578,590],[160,574,582],[170,578,586],[184,574,582]].forEach(function(r){s+='<rect x="'+r[0]+'" y="'+r[1]+'" width="6" height="'+(r[2]-r[1])+'" fill="#a06ab8" fill-opacity=".55"/>';});
  var B='#a6d4e6',Rd='#dc2440';
  var cs=[[192,578,590,Rd],[199,581,598,Rd],[207,589,599,Rd],[214,592,599,Rd],[221,583,598,B,583,600],[229,583,590,B,574,590],[236,584,586,Rd,574,598],[244,586,599,Rd],[251,592,598,Rd],[258,591,595,B],[265,590,593,B],[273,591,595,Rd,588,598],[280,583,596,B,578,598],[288,584,587,B,578,594],[295,585,587,Rd,578,592],[302,585,590,Rd],[310,578,587,B,558,590],[317,571,580,B,558,582],[324,574,577,B],[331,571,577,B,558,579],[339,575,576,B],[346,571,576,B,558,578],[353,566,572,B,558,572],[360,567,571,B],[368,568,580,Rd,566,582],[375,575,590,Rd],[383,578,582,B,560,590],[390,575,580,B],[397,566,574,B],[404,550,572,B,550,574],[412,545,566,B],[419,535,552,B],[427,527,545,B,518,552],[434,506,532,B,494,532],[442,502,515,B,494,516],[449,503,511,B,494,512],[456,507,510,Rd],[463,508,511,Rd],[471,502,510,B,494,512],[478,503,507,B,494,510],[485,505,510,Rd],[491,507,510,Rd],[500,508,510,Rd],[507,503,510,B,494,512],[514,495,505,B,494,506],[521,496,500,B],[530,496,498,B],[537,495,497,Rd],[544,486,497,B,478,498],[552,478,491,B],[559,478,484,B],[566,478,481,B]];
  cs.forEach(function(c){var x=c[0];if(c[4])s+='<path d="M'+(x+.5)+' '+c[4]+'V'+c[5]+'" stroke="'+c[3]+'" stroke-width=".8"/>';s+='<rect x="'+(x-3)+'" y="'+c[1]+'" width="6" height="'+(c[2]-c[1])+'" fill="'+c[3]+'"/>';});
  s+='<path d="M368 590L555 454" stroke="#4caf50"/>';
  [[280,595],[317,578],[331,578],[346,578],[404,562],[544,498],[155,649]].forEach(function(t){s+='<path d="M'+(t[0]-4)+' '+(t[1]+3)+'h8l-4-6z" fill="#86e898"/>';});
  s+='<path d="M366 568h7l-3.500 5z" fill="#e86a7a"/>';
  s+=T(122,465,'UBU4 - Tick(50)','#dfe6ee',9,'font-weight="700" '+L(64));
  s+=T(124,476,'Auto Trend Line(5,6,50)','#4f5fa0',7.500,L(78));
  s+='<use href="#i-gear" x="206" y="469" width="9" height="9"/>'+T(217,476,'Time Frame(12:00 AM - 09:00 AM)','#e6e6e6',7.500,L(113));
  s+='<use href="#i-gear" x="332" y="469" width="9" height="9"/>'+T(343,476,'Support/Resistance(C,5)','#c8242c',7.500,L(80));
  s+='<use href="#i-gear" x="427" y="469" width="9" height="9"/>'+T(438,476,'Support/Resistance(C,10)','#c8242c',7.500,L(85));
  s+='<use href="#i-gear" x="526" y="469" width="9" height="9"/>'+T(537,476,'VP(1,Day)','#c88a1c',7.500,L(34));
  s+='<use href="#i-gear" x="576" y="469" width="9" height="9"/>'+T(587,476,'VP(90,Day)','#c88a1c',7.500,L(38));
  s+='<use href="#i-gear" x="629" y="469" width="9" height="9"/>';
  s+='<rect x="118" y="588" width="62" height="11" fill="#7a7f90" fill-opacity=".5"/>'+T(120,597,'motivewave.com','#dde',8.500,L(59));
  s+=T(822,561,"0'180",'#7fa4c8',7.500,'text-anchor="middle"');
  s+='<path d="M117 600.500H849M849 455V614" stroke="#777"/>';
  [["15:17:21",159],["15:19:21",239],["15:21:21",309],["15:23:21",369],["15:26:21",447],["15:29:21",511],["15:31:21",576],["15:37:21",631],["15:46:21",713],["15:52:21",769]].forEach(function(t){s+=T(t[1],611,t[0],'#bbb',8.500,'text-anchor="middle"')+'<path d="M'+t[1]+' 600v2" stroke="#999"/>';});
  function tag(y,t,bg,fg){return '<path d="M846 '+y+'l4-5h32v10h-32z" fill="'+bg+'"/>'+T(851,y+3,t,fg,8);}
  s+=tag(462,"127'030",'#c462cc','#201020')+tag(478,"127'020",'#f2f2f2','#111')+tag(494,"127'010",'#e83048','#fff')+tag(510,"127'000",'#3d95ec','#fff')+tag(526,"126'310",'#3d95ec','#fff')+tag(558,"126'290",'#e83048','#fff');
  s+=T(851,545,"126'300",'#c8c8c8',8)+T(851,577,"126'280",'#c8c8c8',8)+'<path d="M849 542h2M849 574h2" stroke="#999"/>';
  s+='<rect x="117" y="614" width="768" height="3" fill="#3a3a3a"/><rect x="117" y="652" width="768" height="3" fill="#3a3a3a"/><rect x="117" y="690" width="768" height="1" fill="#3a3a3a"/><path d="M849 617V694" stroke="#555"/>';
  s+='<path d="M117 626H849" stroke="#b01c34"/><path d="M117 635.500H849" stroke="#e0e0e0" stroke-dasharray="3 2" stroke-width=".8"/><rect x="117" y="644" width="732" height="2" fill="#3c8c3c"/>';
  s+='<path d="M280 626C290 624 330 622 368 623L385 626Z M430 626C445 622 470 620 500 626Z" fill="#8e8e8e" stroke="none"/>';
  s+='<path d="M280 626C300 622 340 621 368 623L385 630 395 635 405 632 430 624C450 620 470 620 490 628L505 634 525 636 540 632 558 626" stroke="#c8c8c8" fill="none"/>';
  s+='<path d="M117 630C125 640 135 648 150 648S185 646 215 642 260 632 285 625L368 624 390 634 410 630 430 624C460 620 480 624 500 632L525 635 558 628" stroke="#b84050" fill="none"/>';
  s+='<path d="M117 634C125 644 135 649 150 648S185 642 215 643 260 630 285 624" stroke="#d8d8d0" fill="none"/>';
  [302,324,346,368,456].forEach(function(x){s+='<path d="M'+(x-3)+' 619h6l-3 4z" fill="#e07a8a"/>';});
  s+=T(122,628,'Stochastic RSI(C,14,SMMA,14,5,3,SMA)','#e2d8d0',8.500,'font-weight="700" '+L(148))+'<use href="#i-gear" x="272" y="620" width="11" height="11"/>';
  s+=T(811,627,'↑','#eee',11,'font-weight="700"')+T(823,627,'↓','#eee',11,'font-weight="700"')+'<path d="M835 619l7 7M842 619l-7 7" stroke="#eee" stroke-width="1.500"/>';
  [[626,'80.0000'],[635.500,'50.0000'],[645,'20.0000']].forEach(function(t){s+='<rect x="850" y="'+(t[0]-5)+'" width="33" height="10" fill="#f5f5f5"/>'+T(851,t[0]+3,t[1],'#333',8);});
  s+='<path d="M850 621v9" stroke="#c02040" stroke-width="1.500"/><path d="M850 640v10" stroke="#30a030" stroke-width="1.500"/>';
  var ys=[670,672,672,668,668,667,668,671,670,668,668,673,675,675,673,674,676,677,677,678,678,675,675,676,677,672,670,669,668,669,672,680,681,682,683,684,685,682,679,677,672,669,668,666,669,667,667,668,668,669,669,666,666,666,667,667,665,661,659,660,660];
  var cl=[1,1,1,0,0,0,1,1,0,1,1,1,1,1,0,1,0,1,1,0,1,0,1,1,0,0,0,0,0,1,1,1,1,1,1,1,1,0,0,0,0,0,0,0,1,0,0,1,1,1,0,0,1,1,0,1,0,0,0,1,1];
  ys.forEach(function(y,i){var x=117+i*7.43;var h=cl[i]?3:2+(i%3)*1.500;if(i>30&&i<37)h=4;s+='<rect x="'+x+'" y="'+y+'" width="6" height="'+h+'" fill="'+(cl[i]?'#dc2440':'#9ccfe0')+'"/>';});
  s+=T(122,666,'Cumulative Delta','#e0e0e0',8.500,'font-weight="700" '+L(64))+'<use href="#i-gear" x="188" y="658" width="10" height="10"/>';
  s+=T(823,665,'↑','#eee',11,'font-weight="700"')+'<path d="M835 657l7 7M842 657l-7 7" stroke="#eee" stroke-width="1.500"/>';
  s+='<path d="M846 661l4-5h20v10h-20z" fill="#f5f5f5"/>'+T(851,664,'1488','#222',8)+T(851,679,'1200','#c8c8c8',8);
  document.getElementById('chart').innerHTML=s;
})();
</script>
</body></html>
